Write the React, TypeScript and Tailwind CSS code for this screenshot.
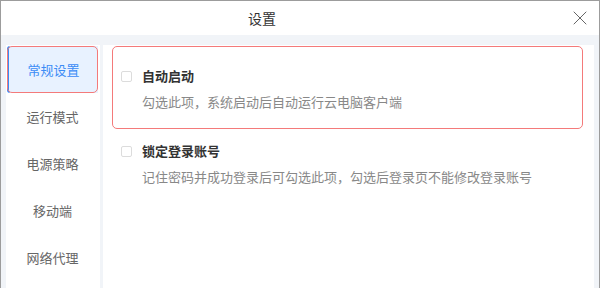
import { X } from 'lucide-react'

const menu = ['常规设置', '运行模式', '电源策略', '移动端', '网络代理']

const font = { fontFamily: '"Noto Sans CJK SC", "Noto Sans", sans-serif' }

function Option({ title, desc, highlight }: { title: string; desc: string; highlight?: boolean }) {
  return (
    <div
      className={`rounded-[5px] border-[1.5px] px-[8px] ${
        highlight ? 'border-[#f47a7a] h-[83px] pt-[20px]' : 'border-transparent pt-[12px]'
      }`}
    >
      <div className="flex items-center gap-[10px]">
        <span className="w-[11px] h-[11px] mt-[1px] border border-[#dcdcdc] rounded-[2px] bg-white" />
        <span className="text-[13px] leading-[18px] font-semibold text-[#333]">{title}</span>
      </div>
      <div className="ml-[21px] mt-[8px] text-[13px] leading-[18px] text-[#888]">{desc}</div>
    </div>
  )
}

export default function App() {
  return (
    <div className="w-[600px] h-[288px] overflow-hidden border-x border-t border-[#9c9c9c] bg-white flex flex-col" style={font}>
      {/* title bar */}
      <div className="h-[34px] flex items-center shrink-0">
        <div className="flex-1 text-center text-[14px] text-[#333] pr-[2px]">设置</div>
        <div className="w-[74px] flex justify-end pr-[7px]">
          <X className="w-[24px] h-[24px] text-[#666]" strokeWidth={1} />
        </div>
      </div>

      <div className="flex-1 flex bg-[#f1f4f8] pl-[5px] pr-[5px] pt-[10px] gap-[3px]">
        {/* sidebar */}
        <div className="w-[94px] bg-white pl-[1px] pr-[2px] pt-[1px]">
          {menu.map((m, i) => (
            <div
              key={m}
              className={`relative h-[47px] flex items-center justify-center text-[13px] ${
                i === 0 ? 'bg-[#e8f2ff] text-[#3b8cf6] border-l-2 border-[#3b8cf6] rounded-l-[3px]' : 'text-[#666]'
              }`}
            >
              {m}
              {i === 0 && (
                <span className="absolute -left-[2px] top-0 right-0 bottom-0 rounded-[5px] border-[1.5px] border-[#f47a7a]" />
              )}
            </div>
          ))}
        </div>

        {/* content */}
        <div className="flex-1 bg-white pl-[9px] pr-[11px] pt-[1px]">
          <Option title="自动启动" desc="勾选此项，系统启动后自动运行云电脑客户端" highlight />
          <Option title="锁定登录账号" desc="记住密码并成功登录后可勾选此项，勾选后登录页不能修改登录账号" />
        </div>
      </div>
    </div>
  )
}
